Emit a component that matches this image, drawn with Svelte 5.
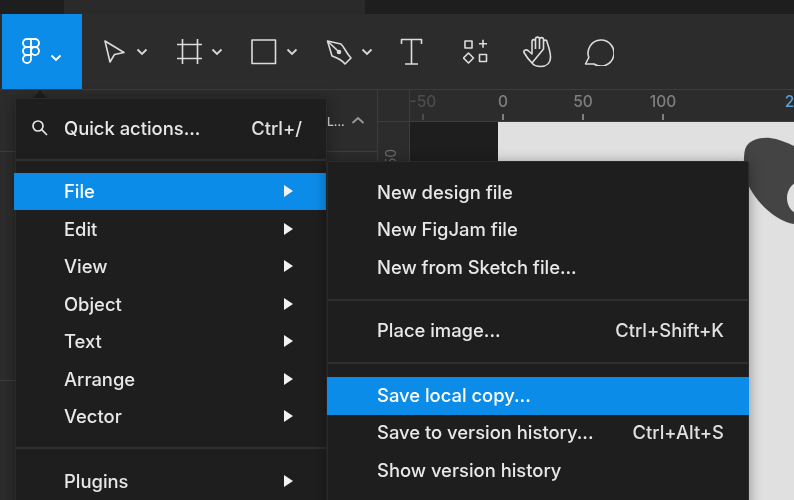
<script>
  const mainItems = [
    { label: 'File', active: true },
    { label: 'Edit' },
    { label: 'View' },
    { label: 'Object' },
    { label: 'Text' },
    { label: 'Arrange' },
    { label: 'Vector' }
  ];
  const marks = ['-50', '0', '50', '100'];
</script>

<div class="app">
  <div class="strip">
    <div class="strip-a"></div>
    <div class="strip-b"></div>
    <div class="strip-c"></div>
  </div>

  <div class="toolbar">
    <div class="logo">
      <svg class="logo-mark" width="18" height="26" viewBox="0 0 18 26" fill="none" stroke="#fff" stroke-width="1.8">
        <path d="M9 1H5a4 4 0 0 0 0 8h4zM9 1h4a4 4 0 0 1 0 8H9zM9 9H5a4 4 0 0 0 0 8h4zM9 17H5a4 4 0 1 0 4 4z" />
        <circle cx="13" cy="13" r="4" />
      </svg>
      <svg class="chev logo-chev" width="12" height="8" viewBox="0 0 12 8"><path d="M1.5 1.5 6 6l4.500-4.500" /></svg>
    </div>

    <div class="tool w74">
      <svg width="24" height="26" viewBox="103 39 24 26" class="ic"><path d="M105 41l19 11.500-9.500 2L110 62z" /></svg>
      <svg class="chev" width="12" height="8" viewBox="0 0 12 8"><path d="M1.500 1.500 6 6l4.500-4.500" /></svg>
    </div>
    <div class="tool w74">
      <svg width="26" height="26" viewBox="178 39 26 26" class="ic"><path d="M183.500 39v25M198.500 39v25M178 44.500h25M178 58.500h25" /></svg>
      <svg class="chev" width="12" height="8" viewBox="0 0 12 8"><path d="M1.500 1.500 6 6l4.500-4.500" /></svg>
    </div>
    <div class="tool w75">
      <svg width="26" height="26" viewBox="252 39 26 26" class="ic"><rect x="253" y="40" width="23.500" height="23.500" /></svg>
      <svg class="chev" width="12" height="8" viewBox="0 0 12 8"><path d="M1.500 1.500 6 6l4.500-4.500" /></svg>
    </div>
    <div class="tool w74">
      <svg width="26" height="26" viewBox="326 38 26 26" class="ic">
        <path d="M327.500 40l13.500 3c4 4 5 9 10 14l-6 6c-4-5-8-6-13-8z" />
        <path d="M328 40.500l10 9.500" />
        <circle cx="339" cy="51" r="1.500" fill="#ddd" />
      </svg>
      <svg class="chev" width="12" height="8" viewBox="0 0 12 8"><path d="M1.500 1.500 6 6l4.500-4.500" /></svg>
    </div>

    <div class="tool w63">
      <svg width="24" height="28" viewBox="401 38 24 28" class="ic"><path d="M402.500 44v-4.500h20V44M412.500 39.500V64M406 64h13" /></svg>
    </div>
    <div class="tool w59">
      <svg width="26" height="26" viewBox="464 38 26 26" class="ic">
        <rect x="466" y="40" width="7" height="7" />
        <path d="M480 42.700h8M484 38.700v8" />
        <path d="M469.500 52l5 5-5 5-5-5z" />
        <rect x="480.500" y="53.500" width="7" height="7" />
      </svg>
    </div>
    <div class="tool w62">
      <svg width="30" height="33" viewBox="522 35 30 33" class="ic">
        <path d="M532 63c-3-3-6-7-8-10.500-1-2 2-3.500 4-2l4 3.500V41.500c0-2.500 3.500-2.500 3.500 0V49M535.500 49V39c0-2.500 4-2.500 4 0v10M539.500 49V39.500c0-2.500 4-2.500 4 0V49M543.500 49v-7c0-2.500 3.500-2.500 3.500 0 2 6 3.500 10 3.500 15 0 6-4 9.500-10 9.500-3.500 0-6.500-1-8.500-3.500z" />
      </svg>
    </div>
    <div class="tool">
      <svg width="30" height="28" viewBox="584 38 30 28" class="ic">
        <path d="M585.500 64l3.300-6.500A13 13 0 1 1 594 64z" />
      </svg>
    </div>
  </div>

  <div class="work">
    <aside class="panel">
      <section class="panel-top">
        <div class="panel-row">
          <span class="clip">L...</span>
          <svg class="chev up" width="14" height="9" viewBox="0 0 14 9"><path d="M1.500 7 7 2l5.500 5" /></svg>
        </div>
      </section>
      <section class="panel-mid"></section>
    </aside>

    <div class="corner"></div>

    <div class="ruler-top">
      {#each marks as m, i}
        <div class="mark" class:faint={i === 0}><span>{m}</span><i></i></div>
      {/each}
      <div class="mark blue"><span>2</span></div>
    </div>

    <div class="ruler-left">
      <span class="vlabel">50</span>
    </div>

    <div class="canvas">
      <div class="offcanvas"></div>
      <div class="page">
        <svg class="blob" width="60" height="110" viewBox="0 0 60 110">
          <path d="M10.500 26C12 14 26 11 36 12c8 1 16 4 24 8v78C44 96 22 78 13 56 10 46 9 38 10.500 26z" fill="#444" />
          <ellipse cx="66" cy="72" rx="13" ry="16" fill="#e0e0e0" />
        </svg>
      </div>
    </div>
  </div>

  <div class="caret"></div>

  <nav class="menu main">
    <div class="row quick">
      <svg class="search" width="18" height="18" viewBox="0 0 18 18" fill="none" stroke="#e4e4e4" stroke-width="1.700">
        <circle cx="7" cy="7" r="5" /><path d="M10.700 10.700 16 16" />
      </svg>
      <span class="label">Quick actions...</span>
      <span class="short">Ctrl+/</span>
    </div>
    <hr class="sep first" />
    {#each mainItems as item}
      <div class="row" class:active={item.active}>
        <span class="label">{item.label}</span>
        <span class="arrow"></span>
      </div>
    {/each}
    <hr class="sep second" />
    <div class="row">
      <span class="label">Plugins</span>
      <span class="arrow"></span>
    </div>
  </nav>

  <nav class="menu sub">
    <div class="row"><span class="label">New design file</span></div>
    <div class="row"><span class="label">New FigJam file</span></div>
    <div class="row"><span class="label">New from Sketch file...</span></div>
    <hr class="sep s1" />
    <div class="row"><span class="label">Place image...</span><span class="short">Ctrl+Shift+K</span></div>
    <hr class="sep s2" />
    <div class="row active"><span class="label">Save local copy...</span></div>
    <div class="row"><span class="label">Save to version history...</span><span class="short">Ctrl+Alt+S</span></div>
    <div class="row"><span class="label">Show version history</span></div>
  </nav>
</div>

<style>
  :global(body) {
    margin: 0;
    background: #2c2c2c;
  }
  .app {
    position: relative;
    width: 794px;
    height: 500px;
    overflow: hidden;
    background: #2c2c2c;
    font-family: Inter, "Liberation Sans", sans-serif;
    filter: blur(0.4px);
  }
  .strip {
    display: flex;
    height: 14px;
  }
  .strip-a { width: 64px; background: #1e1e1e; }
  .strip-b { width: 301px; background: #2a2a2a; }
  .strip-c { flex: 1; background: #1e1e1e; }

  .toolbar {
    display: flex;
    align-items: center;
    height: 75px;
    background: #2c2c2c;
    border-bottom: 1px solid #3d3d3d;
  }
  .logo {
    display: flex;
    align-items: center;
    width: 80px;
    height: 75px;
    margin-left: 2px;
    margin-right: 21px;
    background: #0c8ce9;
    flex: none;
    box-sizing: border-box;
    padding-left: 20px;
  }
  .logo-mark { margin-top: -2px; }
  .logo-chev { margin: 13px 0 0 10px; stroke: #fff !important; }
  .tool {
    display: flex;
    align-items: center;
    flex: none;
    height: 75px;
  }
  .w74 { width: 74px; }
  .w75 { width: 75px; }
  .w63 { width: 63px; }
  .w62 { width: 62px; }
  .w59 { width: 59px; }
  .ic {
    fill: none;
    stroke: #dcdcdc;
    stroke-width: 1.600;
    stroke-linejoin: round;
    flex: none;
  }
  .chev {
    fill: none;
    stroke: #d8d8d8;
    stroke-width: 1.800;
    flex: none;
  }
  .tool .chev { margin-left: 9px; }
  .tool:nth-child(3) .chev { margin-left: 8px; }

  .work {
    display: grid;
    grid-template-columns: 378px 32px 1fr;
    grid-template-rows: 32px 1fr;
    height: 410px;
  }
  .panel {
    grid-row: 1 / 3;
    border-right: 1px solid #3d3d3d;
    box-sizing: border-box;
  }
  .panel-top {
    height: 62px;
    box-sizing: border-box;
    border-bottom: 1px solid #3d3d3d;
  }
  .panel-mid {
    height: 229px;
    box-sizing: border-box;
    border-bottom: 1px solid #3d3d3d;
  }
  .panel-row {
    display: flex;
    align-items: center;
    padding: 23px 0 0 327px;
    height: 16px;
  }
  .clip {
    color: #d8d8d8;
    font-size: 12px;
    font-weight: 500;
    width: 24px;
  }
  .up { stroke: #999; margin-left: 0; margin-top: -2px; }

  .corner {
    box-sizing: border-box;
    border-right: 1px solid #3d3d3d;
    border-bottom: 1px solid #3d3d3d;
  }
  .ruler-top {
    display: flex;
    overflow: hidden;
    box-sizing: border-box;
    border-bottom: 1px solid #3d3d3d;
  }
  .mark {
    flex: none;
    width: 80px;
    box-sizing: border-box;
    text-align: center;
    font-size: 15.500px;
    font-weight: 500;
    line-height: 17px;
    padding-top: 3px;
    color: #7f7f7f;
  }
  .mark:first-child { margin-left: -27px; }
  .mark i {
    display: block;
    width: 2px;
    height: 6px;
    margin: 4px auto 0;
    background: #7f7f7f;
  }
  .faint { color: #4c4c4c; }
  .faint i { background: #4c4c4c; }
  .blue {
    width: 18px;
    color: #5a9fd6;
    margin-left: 77.500px;
  }
  .ruler-left {
    box-sizing: border-box;
    border-right: 1px solid #3d3d3d;
    overflow: hidden;
  }
  .vlabel {
    display: block;
    width: 24px;
    transform: rotate(-90deg);
    transform-origin: center;
    color: #6c6c6c;
    font-size: 14px;
    margin: 27px 0 0 0;
    text-align: center;
  }
  .canvas {
    display: flex;
    background: #1e1e1e;
    min-height: 0;
  }
  .offcanvas {
    width: 88px;
    flex: none;
  }
  .page {
    position: relative;
    flex: 1;
    background: #e0e0e0;
    overflow: hidden;
  }
  .blob {
    position: absolute;
    right: 0;
    top: 4px;
  }
  .caret {
    position: absolute;
    left: 32px;
    top: 90px;
    width: 16px;
    height: 9px;
    background: #1e1e1e;
    clip-path: polygon(50% 0, 100% 100%, 0 100%);
  }

  .menu {
    position: absolute;
    box-sizing: border-box;
    background: #1e1e1e;
    box-shadow: 0 2px 14px rgba(0, 0, 0, 0.38);
    border: 1px solid #2a2a2a;
    border-radius: 2px;
    height: 440px;
    color: #e8e8e8;
    font-size: 18.400px;
    font-weight: 550;
    letter-spacing: 0;
  }
  .main {
    left: 15px;
    top: 98px;
    width: 312px;
  }
  .sub {
    left: 327px;
    top: 161px;
    width: 422px;
    padding-top: 12px;
  }
  .row {
    display: flex;
    align-items: center;
    justify-content: space-between;
    height: 37.500px;
    box-sizing: border-box;
    padding-left: 48px;
    white-space: nowrap;
  }
  .sub .row { padding-left: 49px; padding-right: 24px; }
  .sub .label, .sub .short { margin-top: -2px; }
  .main .row { padding-right: 33px; }
  .active {
    background: #0c8ce9;
    color: #fff;
  }
  .main .active { margin-left: -2px; padding-left: 50px; }
  .sub .active { margin: 0 -1px 0 -1px; padding-left: 50px !important; }
  .quick {
    position: relative;
    margin-top: 10px;
    padding-right: 24px !important;
  }
  .search {
    position: absolute;
    left: 15px;
    top: 10px;
  }
  .short { color: #e0e0e0; }
  .arrow {
    width: 0;
    height: 0;
    border-left: 9px solid #f2f2f2;
    border-top: 6px solid transparent;
    border-bottom: 6px solid transparent;
  }
  .sep {
    margin: 0;
    border: 0;
    height: 2px;
    background: #2f2f2f;
  }
  .first { margin: 12px 0 12px; }
  .second { margin: 12px 0 13px; }
  .s1 { margin: 12px 0 12px; }
  .s2 { margin: 12px 0 13px; }
</style>
